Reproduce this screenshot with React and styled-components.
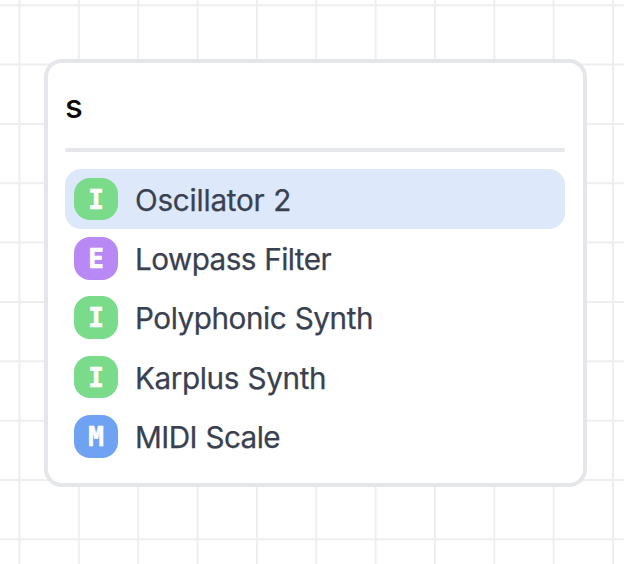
import React from "react";
import styled, { createGlobalStyle } from "styled-components";

const GlobalStyle = createGlobalStyle`
  *, *::before, *::after { box-sizing: border-box; }
  body {
    margin: 0;
    background: #ffffff;
    font-family: Inter, "Liberation Sans", sans-serif;
  }
`;

const Canvas = styled.main`
  position: relative;
  width: 624px;
  height: 564px;
  padding: 59px 37px 0 44px;
  overflow: hidden;
  background: #ffffff;
`;

const GridLines = styled.svg`
  position: absolute;
  inset: 0;
  width: 624px;
  height: 564px;
`;

const Panel = styled.section`
  position: relative;
  display: flex;
  flex-direction: column;
  height: 428px;
  padding: 17px 18px 17px 17px;
  border: 4px solid #e5e6ea;
  border-radius: 18px;
  background: #ffffff;
`;

const SearchInput = styled.input`
  width: 100%;
  height: 68px;
  padding: 0 0 15px;
  border: 0;
  outline: 0;
  background: transparent;
  color: #0a0a0a;
  font: 500 33px/53px Inter, "Liberation Sans", sans-serif;
`;

const Divider = styled.hr`
  width: 100%;
  height: 4px;
  margin: 0 0 17.3px;
  border: 0;
  border-radius: 2px;
  background: #e5e7ea;
`;

const Results = styled.ul`
  display: flex;
  flex-direction: column;
  margin: 0;
  padding: 0;
  list-style: none;
`;

const Result = styled.li`
  display: flex;
  align-items: center;
  gap: 17px;
  height: 59.35px;
  padding: 0 9px;
  border-radius: 16px;
  background: ${(p) => (p.$selected ? "#dde8fa" : "transparent")};
  color: #394150;
`;

const Badge = styled.span`
  flex: none;
  width: 44px;
  height: 42.5px;
  border-radius: 16px;
  background: ${(p) => p.$color};
  color: #ffffff;
  font: 700 26px/45px "DejaVu Sans Mono", monospace;
  -webkit-text-stroke: 0.6px #ffffff;
  text-align: center;
`;

const Label = styled.span`
  padding-top: 1.5px;
  font-size: 29.7px;
  line-height: 44px;
  letter-spacing: ${(p) => p.$tracking}px;
  word-spacing: 0.6px;
  -webkit-text-stroke: 0.25px currentColor;
  white-space: nowrap;
`;

const COLORS = { I: "#7adb8b", E: "#b888f5", M: "#70a2f3" };

const RESULTS = [
  { type: "I", name: "Oscillator 2", tracking: -0.25 },
  { type: "E", name: "Lowpass Filter", tracking: -0.57 },
  { type: "I", name: "Polyphonic Synth", tracking: -0.46 },
  { type: "I", name: "Karplus Synth", tracking: -0.4 },
  { type: "M", name: "MIDI Scale", tracking: -0.55 },
];

const STEP = 59.35;
const columns = Array.from({ length: 11 }, (_, i) => 19.5 + i * STEP);
const rows = Array.from({ length: 10 }, (_, i) => 5.2 + i * STEP);

export default function App() {
  return (
    <>
      <GlobalStyle />
      <Canvas>
        <GridLines viewBox="0 0 624 564" stroke="#eeeeee" strokeWidth="2" aria-hidden="true">
          {columns.map((x) => <line key={x} x1={x} x2={x} y1="0" y2="564" />)}
          {rows.map((y) => <line key={y} x1="0" x2="624" y1={y} y2={y} />)}
        </GridLines>
        <Panel>
          <SearchInput defaultValue="s" aria-label="Search nodes" />
          <Divider />
          <Results>
            {RESULTS.map((r, i) => (
              <Result key={r.name} $selected={i === 0}>
                <Badge $color={COLORS[r.type]}>{r.type}</Badge>
                <Label $tracking={r.tracking}>{r.name}</Label>
              </Result>
            ))}
          </Results>
        </Panel>
      </Canvas>
    </>
  );
}
